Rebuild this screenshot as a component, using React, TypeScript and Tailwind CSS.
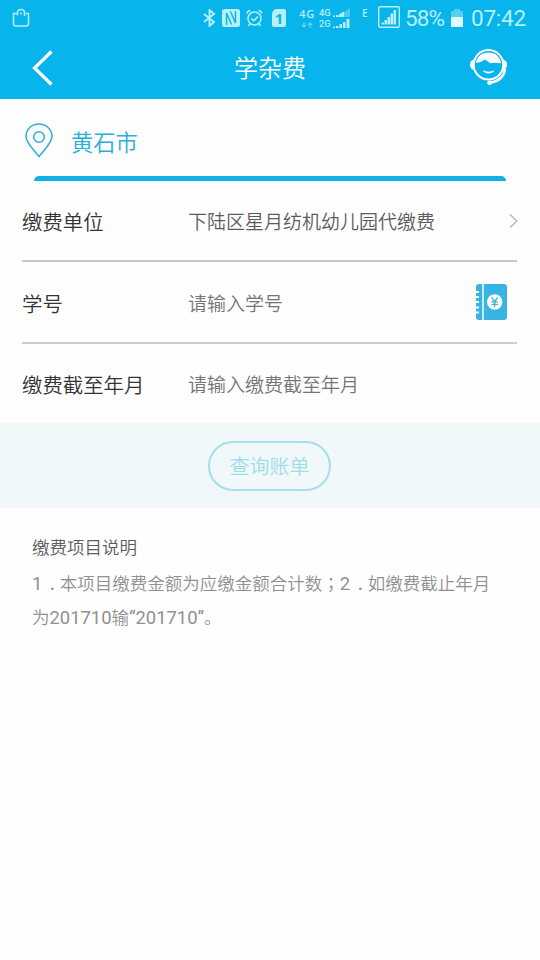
import React from 'react';

const StatusBar: React.FC = () => (
  <div className="flex h-9 items-center pl-3 pr-[14px] text-[#b5f0fb]">
    <svg className="h-5 w-[18px]" viewBox="0 0 18 20" fill="none" stroke="currentColor" strokeWidth="1.5">
      <path d="M5.500 5.500H1.500V15.500Q1.500 18 4 18H14Q16.500 18 16.500 15.500V5.500H13.500" />
      <path d="M5.500 7.500V4.500Q5.500 1.500 9 1.500T12.500 4.500V8M8 5.500H10" />
    </svg>

    <svg className="ml-[173px] h-[18px] w-[13px]" viewBox="0 0 13 18" fill="none" stroke="currentColor" strokeWidth="1.9">
      <path d="M1 5L11 13L6.500 17V1L11 5L1 13" />
    </svg>

    <svg className="ml-[6px] h-[18px] w-[18px]" viewBox="0 0 18 18" fill="none">
      <rect width="18" height="18" rx="2.500" fill="currentColor" />
      <path d="M4.500 16V4L9.500 15.500M13.500 2V14L8.500 2.500" stroke="#08b4ec" strokeWidth="1.400" />
    </svg>

    <svg className="ml-[6px] h-[18px] w-[17px]" viewBox="0 0 17 18" fill="none" stroke="currentColor" strokeWidth="1.500">
      <circle cx="8.500" cy="9.500" r="6.500" />
      <path d="M5.300 9.500L7.800 11.800L12 7.500M1 4.500Q1.500 1.800 4.500 1.500M12.500 1.500Q15.500 1.800 16 4.500M4 14.500L2.500 17M13 14.500L14.500 17" />
    </svg>

    <div className="ml-[9px] flex h-[18px] w-[14px] items-center justify-center rounded-[2px] rounded-tl-[5px] bg-[#b5f0fb] font-['Open_Sans'] text-[15px] font-bold leading-none text-[#08b4ec]">
      1
    </div>

    <div className="ml-[13px] flex w-4 flex-col items-center">
      <span className="font-['Open_Sans'] text-[11px] font-semibold leading-[10px] tracking-[0.6px]">4G</span>
      <svg className="mt-[3px] h-[6px] w-3 opacity-60" viewBox="0 0 12 6" fill="none" stroke="currentColor" strokeWidth="1.100">
        <path d="M3 0V5M1 3L3 5L5 3M9 6V1M7 3L9 1L11 3" />
      </svg>
    </div>

    <div className="ml-1 flex flex-col font-[Roboto] text-[9.3px] font-medium leading-[11px]">
      <div className="flex h-[11px] w-[31px] items-center justify-between">
        <span>4G</span>
        <svg className="h-[9px] w-[17px]" viewBox="0 0 17 9">
          <path d="M4 9L17 0V9Z" fill="currentColor" opacity="0.4" />
          <path d="M0 9V7.500H2V9ZM3 9V7H5.500V9ZM6 9V6.500L11 3.500V9Z" fill="currentColor" />
        </svg>
      </div>
      <div className="flex h-[11px] w-[31px] items-center justify-between">
        <span>2G</span>
        <svg className="h-[9px] w-[17px]" viewBox="0 0 17 9" fill="currentColor">
          <path d="M0 9V7.500H2V9ZM3 9V7H5.500V9ZM6.500 9V5H9V9ZM10 9V3H12.500V9ZM13.500 9V0H16.500V9Z" />
        </svg>
      </div>
    </div>

    <span className="-mt-[10px] ml-[12px] w-[8px] font-['Open_Sans'] text-[10px] font-semibold leading-none">E</span>

    <svg className="-mt-[3px] ml-[8px] h-[22px] w-[22px]" viewBox="0 0 22 22">
      <rect x="0.700" y="0.700" width="20.600" height="20.600" rx="1.500" fill="none" stroke="currentColor" strokeWidth="1.400" />
      <path d="M3.500 18.500V16.500H6V18.500ZM6.500 18.500V14H9V18.500ZM9.500 18.500V11H12V18.500ZM12.500 18.500V7.500H15V18.500ZM15.500 18.500V4H18V18.500Z" fill="currentColor" />
    </svg>

    <span className="ml-[5px] w-[42px] whitespace-nowrap font-[Roboto] text-[22.5px] font-normal leading-none tracking-[-0.9px]">58%</span>

    <svg className="ml-[4px] h-[18px] w-[12px]" viewBox="0 0 12 18" fill="currentColor">
      <path d="M3 0H9V2H12V8H0V2H3Z" opacity="0.45" />
      <path d="M0 8H12V18H0Z" className="fill-[#dcfaff]" />
    </svg>

    <span className="ml-auto whitespace-nowrap font-[Roboto] text-[22.5px] font-normal leading-none tracking-[-0.2px]">07:42</span>
  </div>
);

const ServiceIcon: React.FC = () => (
  <svg className="h-[38px] w-[38px]" viewBox="0 0 38 38" fill="none" stroke="white">
    <circle cx="18.500" cy="15.800" r="14.800" strokeWidth="2" />
    <path d="M5.800 13.800C7 7.500 12 3.500 18.500 3.500S30 7.500 31.200 14.300L24 13.800L20.500 14.300L15 10.500L10 13.300Z" fill="white" stroke="none" />
    <path d="M4 10.500Q0 11.500 0 15.800T4 21ZM33 10.500Q37 11.500 37 15.800T33 21Z" fill="white" stroke="none" />
    <path d="M13 22Q18.500 26.500 24 22Q18.500 24 13 22Z" fill="white" strokeWidth="0.600" />
    <path d="M35 20C34 28 28 32.500 20 33.800" strokeWidth="2.400" />
    <circle cx="19.500" cy="33.800" r="2.300" fill="white" stroke="none" />
  </svg>
);

const NotebookIcon: React.FC = () => (
  <svg className="h-[37px] w-[31px]" viewBox="0 0 31 37">
    <path d="M3 0H28Q31 0 31 3V33Q31 36 28 36H3Q0 36 0 33V3Q0 0 3 0Z" fill="#36b5e3" />
    <path d="M7 0V37" stroke="white" strokeWidth="1.500" />
    <path d="M0 8H3M0 13H3M0 18H3M0 23.500H3M0 28.500H3" stroke="white" strokeWidth="2" />
    <circle cx="18.700" cy="18" r="7.700" fill="white" />
    <path d="M15.500 13.300L18.700 17.500L21.900 13.300M18.700 17.500V23M15.500 17.800H21.900M15.500 20.300H21.900" fill="none" stroke="#36b5e3" strokeWidth="1.300" />
  </svg>
);

interface FormRowProps {
  label: string;
  value: string;
  valueClass: string;
  children?: React.ReactNode;
}

const FormRow: React.FC<FormRowProps> = ({ label, value, valueClass, children }) => (
  <div className="flex h-full items-center">
    <span className="w-[166px] shrink-0 pt-[6px] text-[20.4px] text-[#333333]">{label}</span>
    <span className={`pt-[6px] text-[19px] ${valueClass}`}>{value}</span>
    {children}
  </div>
);

const Digits: React.FC<{ children: string }> = ({ children }) => (
  <span className="text-[18.4px] font-normal">{children}</span>
);

// half-width stop padded to the middle of a full-width cell
const Stop: React.FC = () => (
  <span className="inline-block w-[17.5px] pl-[6px] font-['Noto_Sans_CJK_SC',sans-serif] leading-[26px] [font-feature-settings:'halt']">．</span>
);

const App: React.FC = () => (
  <div className="min-h-screen w-[540px] bg-[#fefefe] font-['Roboto','Noto_Sans_CJK_SC',sans-serif] font-[350]" lang="zh-CN">
    <header className="h-[99px] bg-[#08b4ec]">
      <StatusBar />
      <div className="flex h-[63px] items-center justify-between pl-8 pr-[32px]">
        <svg className="h-[36px] w-[38px]" viewBox="0 0 38 36" fill="none" stroke="white" strokeWidth="3.2">
          <path d="M19.500 1.500L2.500 18L19.500 34.500" />
        </svg>
        <h1 className="pt-[3px] text-[24px] leading-none text-white">学杂费</h1>
        <ServiceIcon />
      </div>
    </header>

    <section className="h-[82px]">
      <div className="flex h-[77px] items-center pl-[25px] pt-[6px]">
        <svg className="h-[35px] w-[28px]" viewBox="0 0 28 35" fill="none" stroke="#28afd8" strokeWidth="1.500">
          <path d="M14 33.500C9 27 1 20 1 13.500C1 6 7 1 14 1S27 6 27 13.500C27 20 19 27 14 33.500Z" />
          <circle cx="14" cy="14" r="5.300" />
        </svg>
        <span className="ml-[18px] pt-[6px] text-[22.3px] leading-none text-[#28afd8]">黄石市</span>
      </div>
      <div className="mx-[34px] h-[5px] rounded-t-[5px] bg-[#12b0e2]" />
    </section>

    <form className="pl-[22px] pr-[23px]">
      <div className="h-[81px] border-b-2 border-[#c6c6c6]">
        <FormRow label="缴费单位" value="下陆区星月纺机幼儿园代缴费" valueClass="text-[#5c5c5c]">
          <svg className="-mr-px ml-auto h-[14px] w-[9px]" viewBox="0 0 9 14" fill="none" stroke="#b0b0b0" strokeWidth="1.200">
            <path d="M1 0.500L8 7L1 13.500" />
          </svg>
        </FormRow>
      </div>
      <div className="h-[82px] border-b-2 border-[#cccccc]">
        <FormRow label="学号" value="请输入学号" valueClass="text-[#757575]">
          <div className="ml-auto mr-[10px]">
            <NotebookIcon />
          </div>
        </FormRow>
      </div>
      <div className="h-[79px]">
        <FormRow label="缴费截至年月" value="请输入缴费截至年月" valueClass="text-[#757575]" />
      </div>
    </form>

    <div className="flex h-[85px] items-center justify-center bg-[#f0f8f9]">
      <button className="mr-px h-[50px] w-[123px] rounded-full border-2 border-[#a6deeb] pt-[3px] text-[20px] leading-none text-[#9fdcea]">
        查询账单
      </button>
    </div>

    <section className="px-8 pt-[27px] text-[17.5px]">
      <h2 className="leading-[26px] text-[#5c5c5c]">缴费项目说明</h2>
      <p className="mt-[5px] whitespace-nowrap leading-[34px] text-[#909090]">
        <Digits>1</Digits><Stop />本项目缴费金额为应缴金额合计数
        <span lang="zh-TW" className="font-['Noto_Sans_CJK_TC',sans-serif]">；</span>
        <Digits>2</Digits><Stop />如缴费截止年月
        <br />
        为<Digits>201710</Digits>输<Digits>“201710”</Digits>。
      </p>
    </section>
  </div>
);

export default App;
